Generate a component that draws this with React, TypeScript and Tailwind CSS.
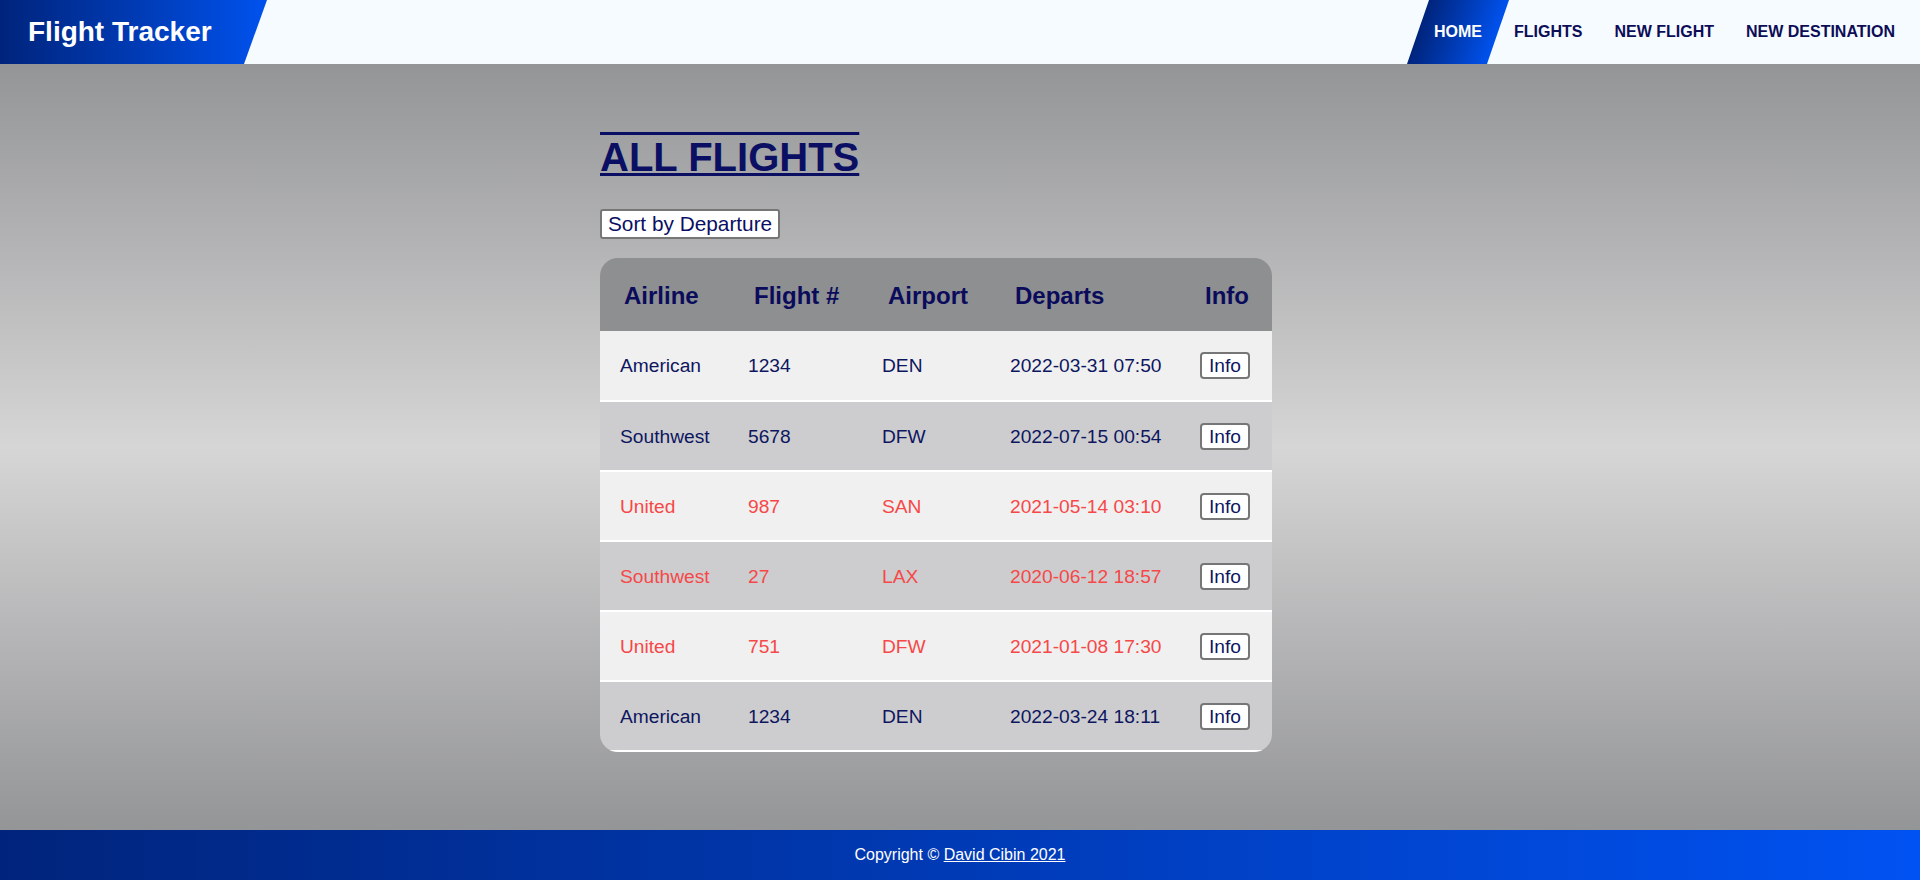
import { useState } from "react";

type Flight = {
  airline: string;
  number: string;
  airport: string;
  departs: string;
  past: boolean;
};

const flights: Flight[] = [
  { airline: "American", number: "1234", airport: "DEN", departs: "2022-03-31 07:50", past: false },
  { airline: "Southwest", number: "5678", airport: "DFW", departs: "2022-07-15 00:54", past: false },
  { airline: "United", number: "987", airport: "SAN", departs: "2021-05-14 03:10", past: true },
  { airline: "Southwest", number: "27", airport: "LAX", departs: "2020-06-12 18:57", past: true },
  { airline: "United", number: "751", airport: "DFW", departs: "2021-01-08 17:30", past: true },
  { airline: "American", number: "1234", airport: "DEN", departs: "2022-03-24 18:11", past: false },
];

const navLinks = ["HOME", "FLIGHTS", "NEW FLIGHT", "NEW DESTINATION"];

const Header = () => {
  return (
    <header className="h-[64px] bg-[#f5fbff] flex justify-between">
      <div className="w-[267px] h-full flex items-center pl-[28px] bg-linear-to-r from-[#00247c] to-[#0052ee] [clip-path:polygon(0_0,100%_0,calc(100%-23px)_100%,0_100%)]">
        <span className="text-white font-bold text-[28px]">Flight Tracker</span>
      </div>
      <nav className="flex h-full pr-[9px]">
        {navLinks.map((link, i) => (
          <a
            key={link}
            href="#"
            className={`relative h-full flex items-center px-4 text-[16px] font-bold ${
              i === 0 ? "text-white" : "text-[#0c0c57]"
            }`}
          >
            {i === 0 && (
              <span className="absolute inset-0 -skew-x-[19deg] bg-linear-to-r from-[#00247c] to-[#0052ee]" />
            )}
            <span className="relative">{link}</span>
          </a>
        ))}
      </nav>
    </header>
  );
};

const FlightTable = ({ rows }: { rows: Flight[] }) => {
  return (
    <div className="w-[672px] rounded-[18px] overflow-hidden">
      <table className="w-full table-fixed border-collapse">
        <colgroup>
          <col className="w-[128px]" />
          <col className="w-[134px]" />
          <col className="w-[128px]" />
          <col className="w-[190px]" />
          <col className="w-[92px]" />
        </colgroup>
        <thead>
          <tr className="h-[73px] bg-[#8e8f90] text-[#0b0b5c]">
            <th className="text-left pl-[24px] pt-[2px] text-[24px] font-bold">Airline</th>
            <th className="text-left pl-[26px] pt-[2px] text-[24px] font-bold">Flight #</th>
            <th className="text-left pl-[26px] pt-[2px] text-[24px] font-bold">Airport</th>
            <th className="text-left pl-[25px] pt-[2px] text-[24px] font-bold">Departs</th>
            <th className="text-left pl-[25px] pt-[2px] text-[24px] font-bold">Info</th>
          </tr>
        </thead>
        <tbody>
          {rows.map((f, i) => (
            <tr
              key={i}
              className={`h-[70px] border-b-2 border-white text-[19.2px] ${
                i % 2 === 0 ? "bg-[#f0f0f0]" : "bg-[#cdcdcf]"
              } ${f.past ? "text-[#f64848]" : "text-[#0e1660]"}`}
            >
              <td className="pl-5 pt-[2px]">{f.airline}</td>
              <td className="pl-5 pt-[2px]">{f.number}</td>
              <td className="pl-5 pt-[2px]">{f.airport}</td>
              <td className="pl-5 pt-[2px]">{f.departs}</td>
              <td className="pl-5 pt-[2px]">
                <button className="bg-white border-2 border-[#767676] rounded-[4px] px-[7px] py-[1px] leading-[21px] text-[19.2px] text-[#0e1660]">
                  Info
                </button>
              </td>
            </tr>
          ))}
        </tbody>
      </table>
    </div>
  );
};

export default function App() {
  const [sorted, setSorted] = useState(false);
  const rows = sorted ? [...flights].sort((a, b) => a.departs.localeCompare(b.departs)) : flights;

  return (
    <div className="min-h-screen flex flex-col font-['Liberation_Sans',Arial,sans-serif]">
      <Header />
      <main className="flex-1 bg-linear-to-b from-[#949597] via-[#d6d6d6] to-[#949597]">
        <div className="w-[720px] mx-auto pt-[70px] pb-10">
          <h1 className="text-[40px] leading-[46px] font-bold text-[#0a0f63] [text-decoration-line:underline_overline] decoration-[3px] w-fit">
            ALL FLIGHTS
          </h1>
          <button
            onClick={() => setSorted(!sorted)}
            className="mt-[29px] bg-white border-2 border-[#767676] rounded-[3px] px-[6px] py-[1px] text-[20.8px] leading-[24px] text-[#0a0f63]"
          >
            Sort by Departure
          </button>
          <div className="mt-[19px]">
            <FlightTable rows={rows} />
          </div>
        </div>
      </main>
      <footer className="h-[50px] flex items-center justify-center bg-linear-to-r from-[#00247c] to-[#0052f2] text-white text-[16px]">
        <p>
          Copyright © <a href="#" className="underline">David Cibin 2021</a>
        </p>
      </footer>
    </div>
  );
}
